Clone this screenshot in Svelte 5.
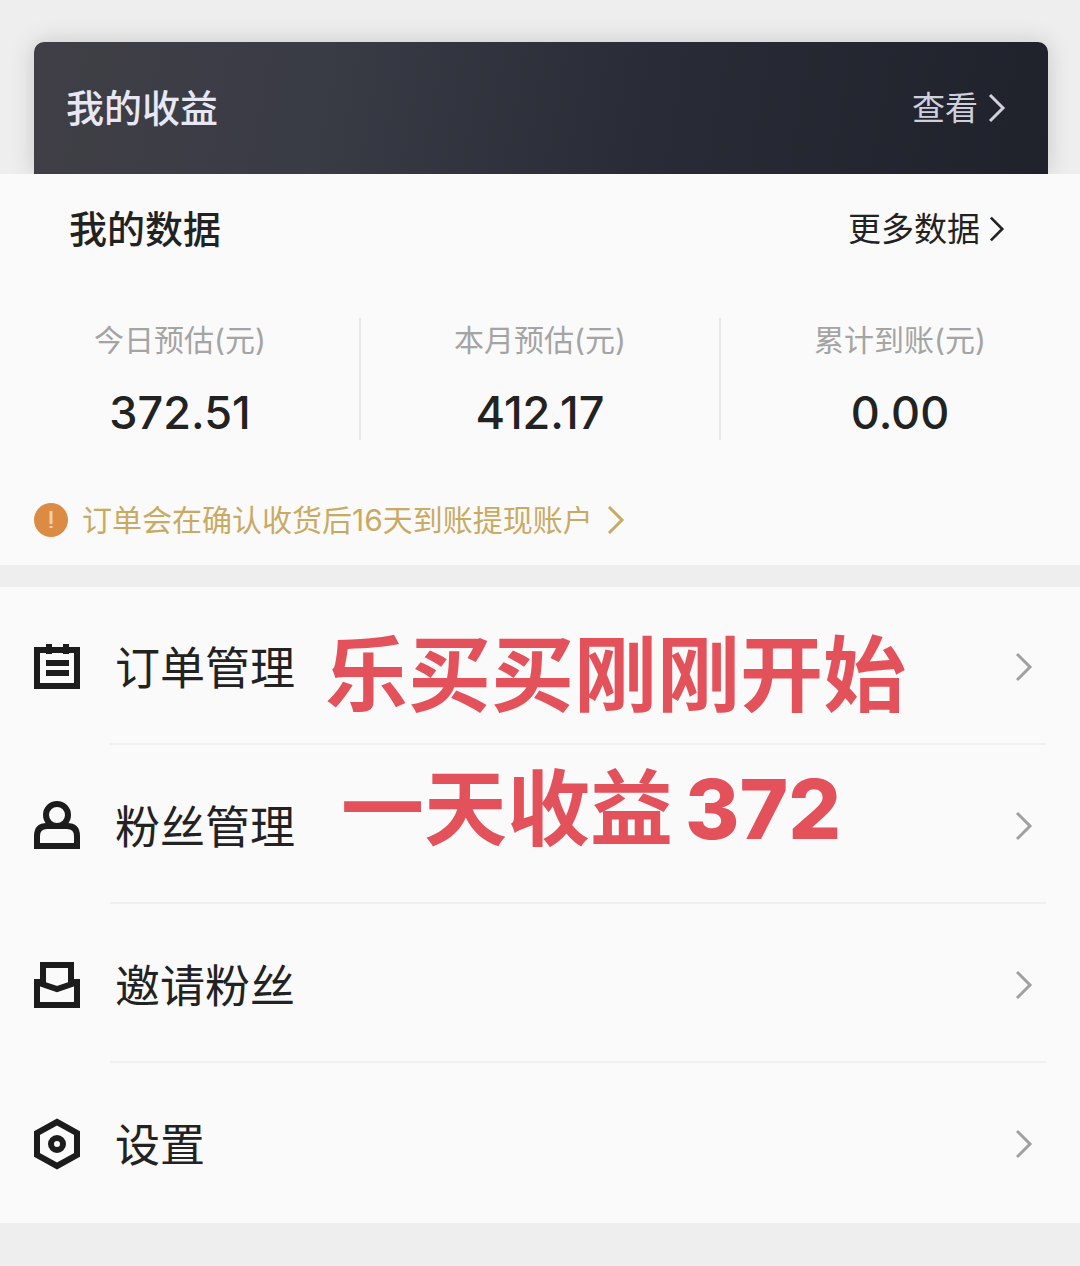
<script lang="ts">
  type Stat = { label: string; value: string };
  type MenuItem = { icon: 'order' | 'fans' | 'invite' | 'settings'; text: string };

  const stats: Stat[] = [
    { label: '今日预估(元)', value: '372.51' },
    { label: '本月预估(元)', value: '412.17' },
    { label: '累计到账(元)', value: '0.00' }
  ];

  const menu: MenuItem[] = [
    { icon: 'order', text: '订单管理' },
    { icon: 'fans', text: '粉丝管理' },
    { icon: 'invite', text: '邀请粉丝' },
    { icon: 'settings', text: '设置' }
  ];
</script>

{#snippet chevron()}
  <svg class="chevron" viewBox="0 0 18 32" aria-hidden="true">
    <path d="M2 3 L15 16 L2 29" />
  </svg>
{/snippet}

<main class="page">
  <header class="top">
    <section class="earnings">
      <h2>我的收益</h2>
      <a class="view-link" href="#earnings">查看{@render chevron()}</a>
    </section>
  </header>

  <section class="data">
    <div class="data-head">
      <h2>我的数据</h2>
      <a class="more-link" href="#data">更多数据{@render chevron()}</a>
    </div>

    <dl class="stats">
      {#each stats as stat}
        <div class="stat">
          <dt>{stat.label}</dt>
          <dd>{stat.value}</dd>
        </div>
      {/each}
    </dl>

    <a class="notice" href="#account">
      <svg class="notice-icon" viewBox="0 0 34 34" aria-hidden="true">
        <circle cx="17" cy="17" r="17" />
        <path d="M17 8 V21 M17 23 V25" />
      </svg>
      <span>订单会在确认收货后16天到账提现账户</span>
      {@render chevron()}
    </a>
  </section>

  <nav class="menu">
    {#each menu as item}
      <a class="menu-item" href="#{item.icon}">
        <svg class="menu-icon" viewBox="0 0 50 54" aria-hidden="true">
          {#if item.icon === 'order'}
            <path d="M5 10 H45 V46 H5 Z M17 4 V14 M34 4 V14" />
            <path d="M14 23 H37 M14 33 H37" />
          {:else if item.icon === 'fans'}
            <circle cx="25" cy="16" r="11" />
            <path d="M5 47 V37 Q5 27 15 27 H35 Q45 27 45 37 V47 Z" />
          {:else if item.icon === 'invite'}
            <path d="M11 27 V7 H39 V27" />
            <path d="M12 24 H5 V47 H45 V24 H38 M7 25 L25 31 L43 25" />
          {:else}
            <path d="M25 5 L45 16 V38 L25 49 L5 38 V16 Z" />
            <circle cx="25" cy="27" r="6" />
          {/if}
        </svg>
        <span class="menu-text">{item.text}</span>
        {@render chevron()}
      </a>
    {/each}

    <div class="caption">
      <p>乐买买刚刚开始</p>
      <p class="second">一天收益<strong>372</strong></p>
    </div>
  </nav>
</main>

<style>
  :global(body) {
    margin: 0;
    background: #eeeeee;
  }

  .page {
    font-family: Inter, "Noto Sans CJK SC", sans-serif;
    color: #222222;
    padding-bottom: 43px;
  }

  h2,
  p,
  dl,
  dd {
    margin: 0;
  }

  a {
    color: inherit;
    text-decoration: none;
  }

  h2 {
    font-size: 38px;
    line-height: 48px;
    font-weight: 500;
  }

  .chevron {
    flex: none;
    width: 18px;
    height: 32px;
    fill: none;
    stroke: currentColor;
    stroke-width: 3;
  }

  .top {
    padding: 42px 32px 0 34px;
    overflow: hidden;
  }

  .earnings {
    display: flex;
    align-items: center;
    justify-content: space-between;
    height: 132px;
    box-sizing: border-box;
    padding: 0 42px 0 32px;
    border-radius: 10px 10px 0 0;
    background: linear-gradient(100deg, #403f46 0%, #393b45 28%, #292c36 60%, #1f212b 100%);
    box-shadow: 0 0 24px rgba(0, 0, 0, 0.16);
    color: #e8e8f4;
  }

  .view-link,
  .more-link {
    display: flex;
    align-items: center;
    gap: 10px;
    font-size: 33px;
    line-height: 48px;
  }

  .view-link {
    color: #d0d0dc;
  }

  .data {
    background: #fafafa;
    padding: 31px 0 23px;
  }

  .data-head {
    display: flex;
    align-items: center;
    justify-content: space-between;
    padding: 0 74px 0 69px;
  }

  .more-link {
    gap: 8px;
  }

  .more-link .chevron {
    height: 28px;
  }

  .stats {
    display: grid;
    grid-template-columns: repeat(3, 1fr);
    margin-top: 65px;
  }

  .stat {
    height: 122px;
    text-align: center;
  }

  .stat + .stat {
    box-shadow: -1px 0 0 #e8e8e8, inset 1px 0 0 #e8e8e8;
  }

  .stat dt {
    font-size: 30px;
    line-height: 44px;
    color: #a4a4a4;
  }

  .stat dd {
    margin-top: 22px;
    font-size: 45px;
    line-height: 58px;
    font-weight: 500;
  }

  .notice {
    display: flex;
    align-items: center;
    margin-top: 58px;
    padding-left: 34px;
    font-size: 30px;
    line-height: 44px;
    color: #c9aa62;
  }

  .notice span {
    margin: 0 14px;
  }

  .notice-icon {
    width: 34px;
    height: 34px;
    fill: #db8b42;
    stroke: #f8cfa0;
    stroke-width: 3;
  }

  .notice-icon circle {
    stroke: none;
  }

  .menu {
    position: relative;
    margin-top: 22px;
    background: #fafafa;
  }

  .menu-item {
    position: relative;
    display: flex;
    align-items: center;
    height: 159px;
    box-sizing: border-box;
    padding: 0 47px 0 32px;
  }

  .menu-item:not(:last-of-type)::after {
    content: '';
    position: absolute;
    left: 110px;
    right: 34px;
    bottom: 1px;
    height: 2px;
    background: #f0f0f0;
  }

  .menu-item .chevron {
    color: #a0a0a0;
  }

  .menu-icon {
    flex: none;
    width: 50px;
    height: 54px;
    fill: none;
    stroke: #1c1c1c;
    stroke-width: 6;
  }

  .menu-text {
    flex: 1;
    margin-left: 33px;
    padding-top: 4px;
    font-size: 45px;
    line-height: 60px;
  }

  .caption {
    position: absolute;
    top: 38px;
    left: 325px;
    font-size: 83px;
    line-height: 100px;
    font-weight: 700;
    color: #e3525b;
    white-space: nowrap;
    pointer-events: none;
  }

  .caption .second {
    margin-top: 34px;
    padding-left: 16px;
  }

  .caption strong {
    margin-left: 12px;
    font-weight: 800;
  }
</style>
